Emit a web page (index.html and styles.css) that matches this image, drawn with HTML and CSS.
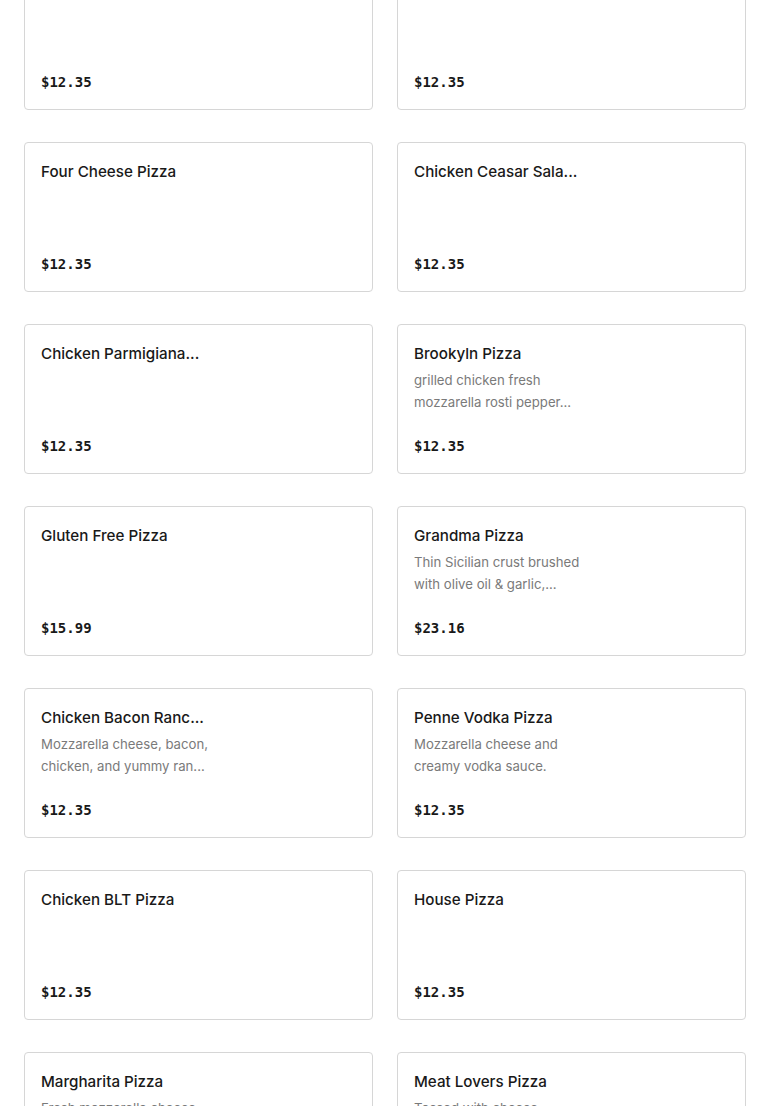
FILE: index.html
```html
<!DOCTYPE html>
<html>
<head>
<meta charset="utf-8">
<link rel="stylesheet" href="styles.css">
</head>
<body>
<div class="menu">
  <div class="card"><div class="title"></div><div class="price">$12.35</div></div>
  <div class="card"><div class="title"></div><div class="price">$12.35</div></div>

  <div class="card"><div class="title">Four Cheese Pizza</div><div class="price">$12.35</div></div>
  <div class="card"><div class="title">Chicken Ceasar Sala...</div><div class="price">$12.35</div></div>

  <div class="card"><div class="title">Chicken Parmigiana...</div><div class="price">$12.35</div></div>
  <div class="card"><div class="title">Brookyln Pizza</div><div class="desc">grilled chicken fresh mozzarella rosti pepper...</div><div class="price">$12.35</div></div>

  <div class="card"><div class="title">Gluten Free Pizza</div><div class="price">$15.99</div></div>
  <div class="card"><div class="title">Grandma Pizza</div><div class="desc">Thin Sicilian crust brushed with olive oil &amp; garlic,...</div><div class="price">$23.16</div></div>

  <div class="card"><div class="title">Chicken Bacon Ranc...</div><div class="desc">Mozzarella cheese, bacon, chicken, and yummy ran...</div><div class="price">$12.35</div></div>
  <div class="card"><div class="title">Penne Vodka Pizza</div><div class="desc">Mozzarella cheese and creamy vodka sauce.</div><div class="price">$12.35</div></div>

  <div class="card"><div class="title">Chicken BLT Pizza</div><div class="price">$12.35</div></div>
  <div class="card"><div class="title">House Pizza</div><div class="price">$12.35</div></div>

  <div class="card"><div class="title">Margharita Pizza</div><div class="desc">Fresh mozzarella cheese,...</div><div class="price">$12.35</div></div>
  <div class="card"><div class="title">Meat Lovers Pizza</div><div class="desc">Tossed with cheese,...</div><div class="price">$12.35</div></div>
</div>
</body>
</html>
```
FILE: styles.css
```css
html, body {
  margin: 0;
  padding: 0;
  background: #ffffff;
  overflow: hidden;
}
body {
  font-family: Inter, "Noto Sans", sans-serif;
  color: #191919;
}
.menu {
  display: grid;
  grid-template-columns: 349px 349px;
  column-gap: 24px;
  row-gap: 32px;
  padding: 0 24px;
  margin-top: -40px;
}
.card {
  box-sizing: border-box;
  height: 150px;
  border: 1px solid #d6d6d6;
  border-radius: 4px;
  padding: 16px;
  display: flex;
  flex-direction: column;
}
.title {
  font-size: 15.2px;
  font-weight: 500;
  line-height: 24px;
  height: 24px;
  margin-top: 1px;
  margin-bottom: 3px;
  white-space: nowrap;
}
.desc {
  font-size: 13.2px;
  line-height: 22px;
  color: #7a7a7a;
  max-width: 172px;
}
.price {
  margin-top: auto;
  margin-bottom: 1px;
  font-family: "DejaVu Sans Mono", "Liberation Mono", monospace;
  font-weight: bold;
  font-size: 14px;
  line-height: 20px;
  color: #191919;
}
```
